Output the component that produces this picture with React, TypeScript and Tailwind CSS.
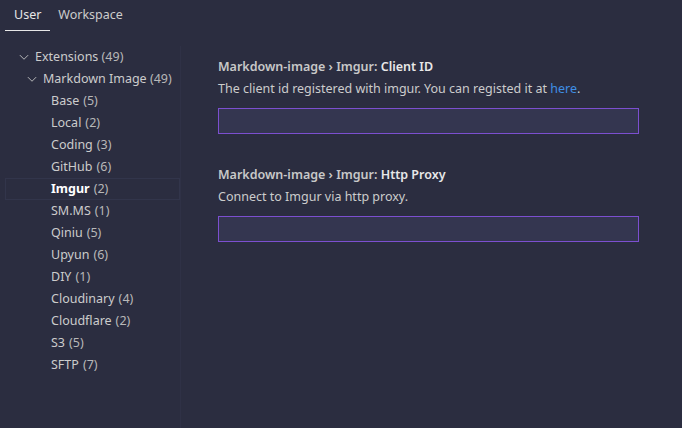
import { FC } from "react";

const items: [string, number][] = [
  ["Base", 5],
  ["Local", 2],
  ["Coding", 3],
  ["GitHub", 6],
  ["Imgur", 2],
  ["SM.MS", 1],
  ["Qiniu", 5],
  ["Upyun", 6],
  ["DIY", 1],
  ["Cloudinary", 4],
  ["Cloudflare", 2],
  ["S3", 5],
  ["SFTP", 7],
];

const Chevron: FC = () => (
  <svg width="12" height="12" viewBox="0 0 16 16" className="shrink-0 text-[#c5c5c5]">
    <path d="M2.5 5.5 8 11l5.5-5.5" fill="none" stroke="currentColor" strokeWidth="1.2" />
  </svg>
);

const App: FC = () => {
  return (
    <div
      className="w-[682px] h-[428px] bg-[#2b2d40] text-[#cccccc] text-[12.5px] overflow-hidden"
      style={{ fontFamily: '"Noto Sans", "Open Sans", sans-serif' }}
    >
      {/* tabs */}
      <div className="flex pl-[5px] h-[31px] items-end">
        <div className="px-[9px] pb-[5px] border-b border-[#e7e7e7] text-[#e7e7e7]">User</div>
        <div className="px-[8px] pb-[5px] border-b border-transparent">Workspace</div>
      </div>

      <div className="flex pt-[15px]">
        {/* tree */}
        <div className="w-[181px] shrink-0 border-r border-[#2f3146] h-[382px]">
          <div className="flex items-center h-[22px] pl-[18px] gap-[5px]">
            <Chevron />
            <span>
              Extensions <span className="text-[#b8b8b8]">(49)</span>
            </span>
          </div>
          <div className="flex items-center h-[22px] pl-[26px] gap-[5px]">
            <Chevron />
            <span>
              Markdown Image <span className="text-[#b8b8b8]">(49)</span>
            </span>
          </div>
          {items.map(([name, n]) => (
            <div
              key={name}
              className={
                name === "Imgur"
                  ? "flex items-center h-[22px] pl-[45px] ml-[5px] border border-[#32354b]"
                  : "flex items-center h-[22px] pl-[51px]"
              }
            >
              <span className={name === "Imgur" ? "font-bold text-white" : ""}>{name}</span>
              <span className="ml-[4px] text-[#b8b8b8]">({n})</span>
            </div>
          ))}
        </div>

        {/* settings */}
        <div className="flex-1 pl-[37px] pr-[43px] pt-[12px]">
          <div className="font-semibold text-[#c8c8c8] leading-[18px]">
            Markdown-image › Imgur: <span className="text-[#e8e8e8]">Client ID</span>
          </div>
          <div className="mt-[4px] leading-[18px]">
            The client id registered with imgur. You can registed it at{" "}
            <span className="text-[#3f8fe5]">here</span>.
          </div>
          <div className="mt-[10px] h-[26px] bg-[#343650] border border-[#7c4fd0]" />

          <div className="mt-[32px] font-semibold text-[#c8c8c8] leading-[18px]">
            Markdown-image › Imgur: <span className="text-[#e8e8e8]">Http Proxy</span>
          </div>
          <div className="mt-[4px] leading-[18px]">Connect to Imgur via http proxy.</div>
          <div className="mt-[10px] h-[26px] bg-[#343650] border border-[#7c4fd0]" />
        </div>
      </div>
    </div>
  );
};

export default App;
